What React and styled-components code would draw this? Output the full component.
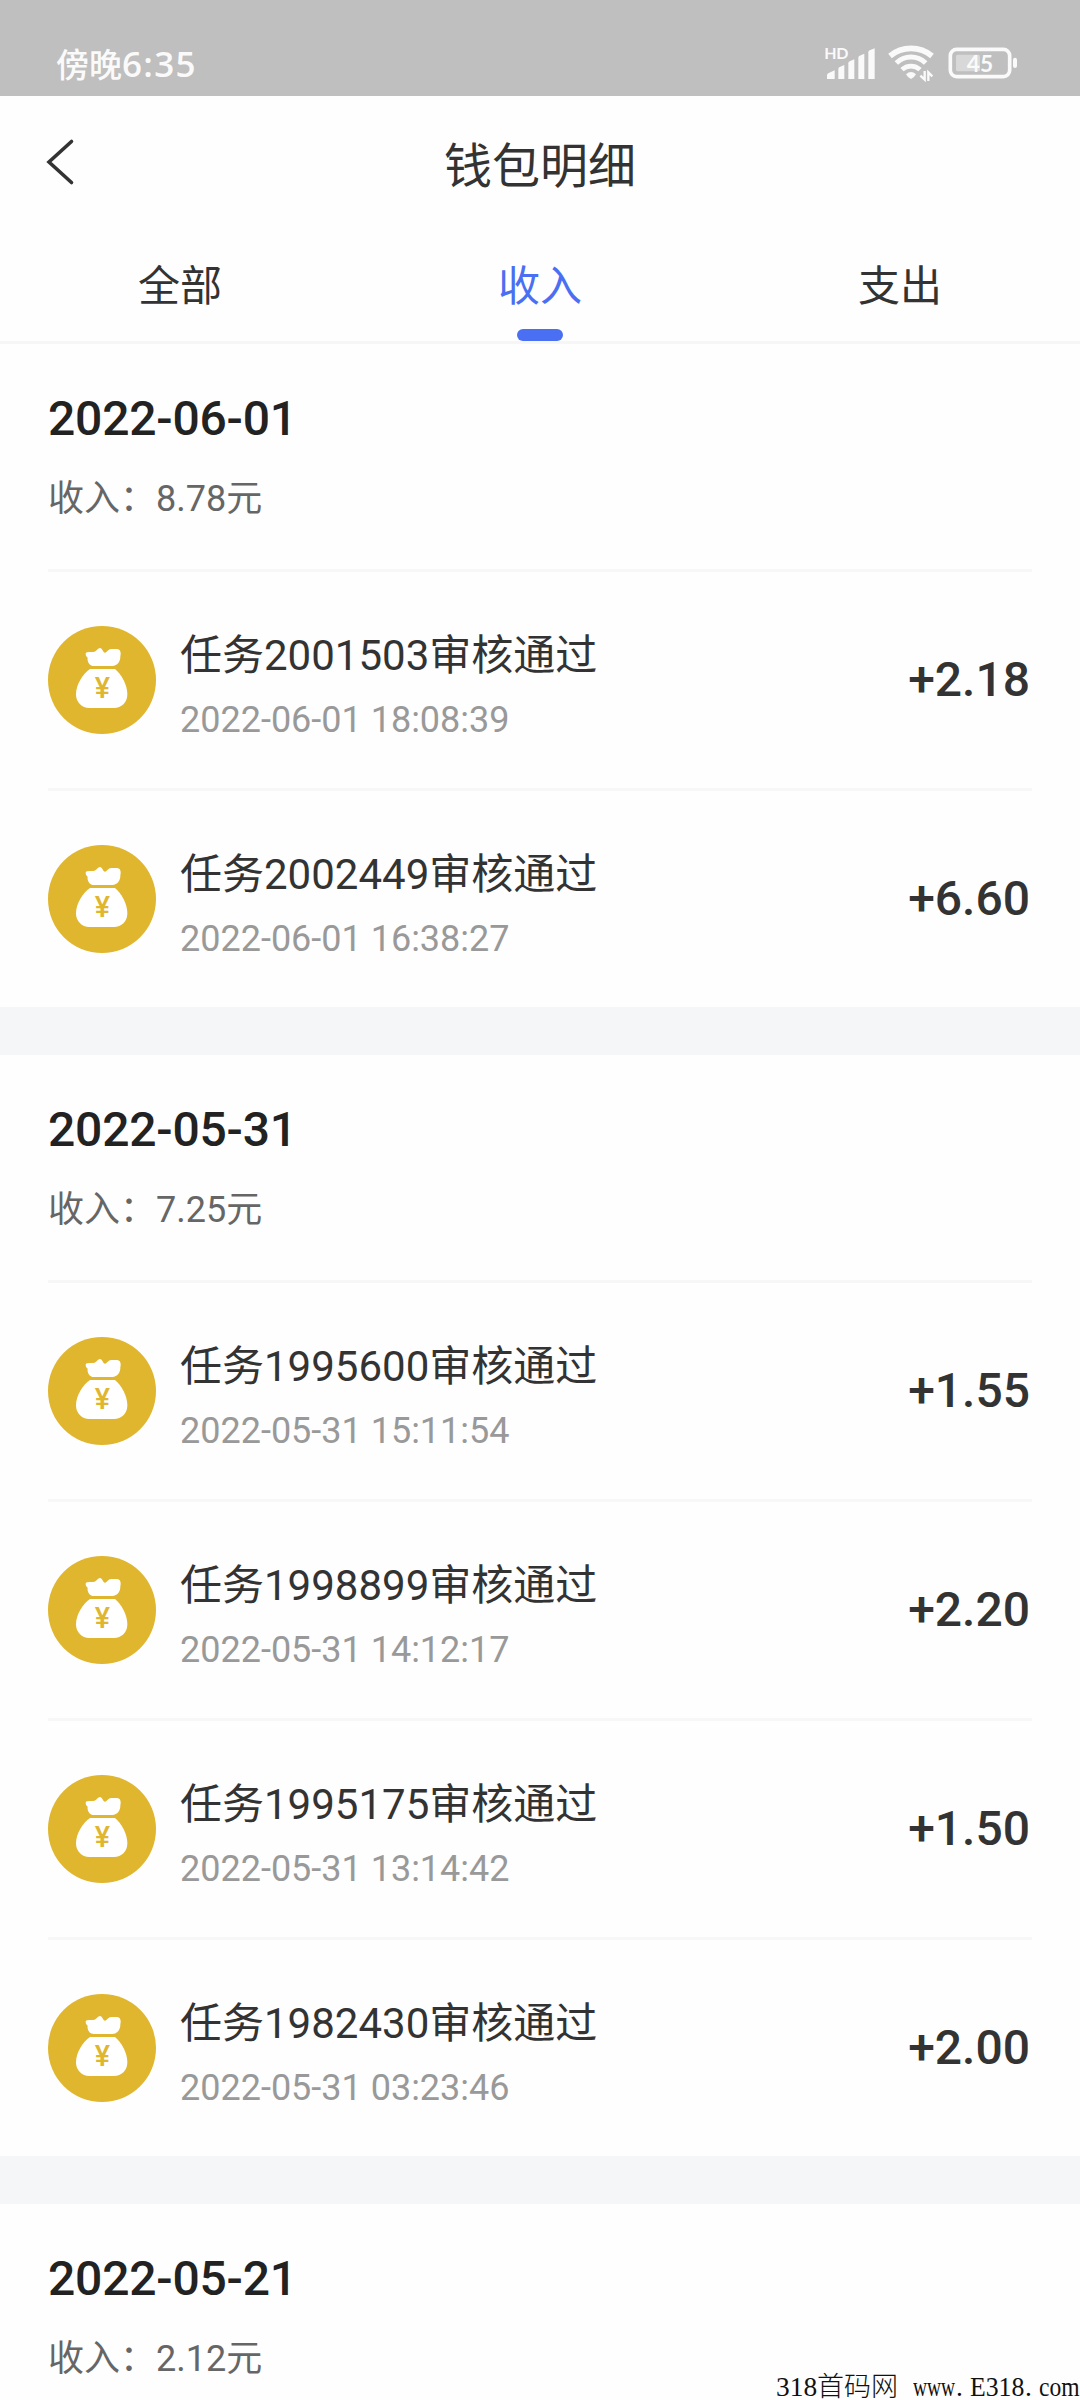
import React from "react";
import styled, { createGlobalStyle } from "styled-components";

const groups = [
  {
    date: "2022-06-01",
    total: "8.78",
    records: [
      { id: "2001503", time: "2022-06-01 18:08:39", amount: "+2.18" },
      { id: "2002449", time: "2022-06-01 16:38:27", amount: "+6.60" },
    ],
  },
  {
    date: "2022-05-31",
    total: "7.25",
    records: [
      { id: "1995600", time: "2022-05-31 15:11:54", amount: "+1.55" },
      { id: "1998899", time: "2022-05-31 14:12:17", amount: "+2.20" },
      { id: "1995175", time: "2022-05-31 13:14:42", amount: "+1.50" },
      { id: "1982430", time: "2022-05-31 03:23:46", amount: "+2.00" },
    ],
  },
  { date: "2022-05-21", total: "2.12", records: [] },
];

const tabs = ["全部", "收入", "支出"];

const SignalIcon = () => (
  <svg width="52" height="34" viewBox="132 78 156 102" fill="#fafafa">
    <text x="133" y="117" fontSize="48" fontWeight="700" fontFamily="Lato, sans-serif" textLength="72">
      HD
    </text>
    <path d="M141 177V166Q141 162 145 160L164 151V177Z" />
    <path d="M175 177V147Q175 143 179 141L193 135V177Z" />
    <path d="M205 177V130Q205 126 209 124L223 118V177Z" />
    <path d="M235 177V113Q235 109 239 107L253 101V177Z" />
    <path d="M265 177V97Q265 93 269 91L284 85V177Z" />
  </svg>
);

const WifiIcon = () => (
  <svg width="48" height="38" viewBox="321 75 144 114" fill="none" stroke="#fafafa">
    <path d="M330 111A99 99 0 0 1 456 111" strokeWidth="17" />
    <path d="M349 132A63 63 0 0 1 437 132" strokeWidth="15" />
    <path d="M366 152A39 39 0 0 1 420 152" strokeWidth="14" />
    <path d="M378 166Q393 152 408 166Q405 173 393 180Q381 173 378 166Z" fill="#fafafa" stroke="none" />
    <path d="M434 156V182L421 170M445 186V160L457 172" strokeWidth="7" />
  </svg>
);

const BatteryIcon = () => (
  <svg width="70" height="32" viewBox="504 81 210 96" fill="none">
    <rect x="511" y="88" width="178" height="82" rx="19" stroke="#fafafa" strokeWidth="11" />
    <rect x="528" y="104" width="72" height="50" rx="5" fill="#d8d8d8" />
    <rect x="699" y="113" width="12" height="31" rx="6" fill="#fafafa" />
    <text x="600" y="155" fontSize="68" fontWeight="700" fontFamily="Lato, sans-serif" fill="#fafafa" textAnchor="middle">
      45
    </text>
  </svg>
);

const MoneyBag = () => (
  <svg width="108" height="108" viewBox="0 0 324 324">
    <circle cx="162" cy="162" r="162" fill="#e0b62f" />
    <path
      d="M113 84C113 76 121 79 140 77C146 75 150 66 156 66C163 66 165 80 171 80C177 80 180 69 190 69H207C217 69 220 80 217 91C218 106 208 120 193 120H138C124 120 117 106 119 95C116 92 113 90 113 84Z"
      fill="#fff"
    />
    <path
      d="M126 129H201C220 144 238 176 238 205C238 230 220 246 198 246H124C101 246 84 229 84 205C84 175 105 143 126 129Z"
      fill="#fff"
    />
    <text x="163" y="217" fontSize="86" fontWeight="500" fontFamily="Roboto, sans-serif" fill="#e0b62f" textAnchor="middle">
      ¥
    </text>
  </svg>
);

const App = () => {
  return (
    <Screen>
      <GlobalStyle />
      <StatusBar>
        <Clock>
          傍晚<span>6:35</span>
        </Clock>
        <SignalIcon />
        <WifiIcon />
        <BatteryIcon />
      </StatusBar>
      <NavBar>
        <BackButton aria-label="返回">
          <svg width="32" height="48" viewBox="0 0 32 48" fill="none" stroke="#333" strokeWidth="3.6">
            <path d="M27.5 3.5L5 24L27.5 44.5" strokeLinecap="round" />
          </svg>
        </BackButton>
        <h1>钱包明细</h1>
      </NavBar>
      <Tabs>
        {tabs.map((tab) => (
          <Tab key={tab} $active={tab === "收入"}>
            {tab}
          </Tab>
        ))}
      </Tabs>
      {groups.map((group) => {
        const { date, total, records } = group;
        return (
          <Group key={date}>
            <GroupHeader>
              <h2>{date}</h2>
              <p>收入：{total}元</p>
            </GroupHeader>
            {records.map((item) => (
              <Record key={item.id}>
                <MoneyBag />
                <RecordInfo>
                  <h3>任务{item.id}审核通过</h3>
                  <time>{item.time}</time>
                </RecordInfo>
                <Amount>{item.amount}</Amount>
              </Record>
            ))}
          </Group>
        );
      })}
      <Watermark>
        <Narrow $width={41}>318</Narrow>
        <b>首码网 </b>
        <Narrow $width={43} $scale={0.71}>www</Narrow>
        <Narrow $width={14}>.</Narrow>
        <Narrow $width={55} $scale={0.94}>E318</Narrow>
        <Narrow $width={14}>.</Narrow>
        <Narrow $width={41} $scale={0.86}>com</Narrow>
      </Watermark>
    </Screen>
  );
};

export default App;

const GlobalStyle = createGlobalStyle`
  * {
    box-sizing: border-box;
    margin: 0;
    padding: 0;
  }
  body {
    background: #fff;
    font-family: Roboto, "Noto Sans CJK SC", sans-serif;
  }
  svg {
    display: block;
    flex-shrink: 0;
    overflow: visible;
  }
`;

const Screen = styled.div`
  position: relative;
  width: 1080px;
  height: 2400px;
  overflow: hidden;
  background: #fefefe;
`;

const StatusBar = styled.div`
  display: flex;
  align-items: center;
  height: 96px;
  padding: 30px 62px 0 56px;
  background: #bfbfbf;
  svg + svg {
    margin-left: 11px;
  }
  svg:last-child {
    margin-left: 13px;
  }
`;

const Clock = styled.div`
  margin-right: auto;
  color: #fafafa;
  font-family: "Noto Sans CJK SC", sans-serif;
  font-size: 33px;
  font-weight: 500;
  line-height: 40px;
  span {
    font-family: "Open Sans", sans-serif;
    font-size: 35px;
    font-weight: 600;
    letter-spacing: 1.3px;
  }
`;

const NavBar = styled.header`
  display: grid;
  grid-template-columns: 120px 1fr 120px;
  align-items: center;
  height: 138px;
  h1 {
    padding-top: 4px;
    color: #333;
    font-size: 48px;
    font-weight: 400;
    line-height: 72px;
    text-align: center;
  }
`;

const BackButton = styled.button`
  padding-left: 44px;
  padding-bottom: 6px;
  border: none;
  background: none;
`;

const Tabs = styled.nav`
  display: grid;
  grid-template-columns: repeat(3, 1fr);
  height: 110px;
  border-bottom: 3px solid #f6f6f7;
`;

const Tab = styled.div`
  display: flex;
  flex-direction: column;
  align-items: center;
  justify-content: space-between;
  padding-top: 21px;
  color: ${({ $active }) => ($active ? "#4a6ff3" : "#333")};
  font-size: 42px;
  line-height: 64px;
  &::after {
    content: "";
    width: 46px;
    height: 12px;
    border-radius: 6px;
    background: ${({ $active }) => ($active ? "#4a6ff3" : "transparent")};
  }
`;

const Group = styled.section`
  & + & {
    border-top: 48px solid #f5f6f8;
  }
`;

const GroupHeader = styled.div`
  height: 228px;
  margin: 0 48px;
  padding-top: 43px;
  border-bottom: 3px solid #f7f7f7;
  h2 {
    color: #222;
    font-size: 48px;
    font-weight: 500;
    line-height: 64px;
    letter-spacing: -0.2px;
  }
  p {
    margin-top: 21px;
    color: #666;
    font-size: 36px;
    line-height: 54px;
  }
`;

const Record = styled.div`
  display: flex;
  align-items: center;
  height: 216px;
  margin: 0 48px;
  & + & {
    height: 219px;
    border-top: 3px solid #f7f7f7;
  }
`;

const RecordInfo = styled.div`
  flex: 1;
  margin-left: 24px;
  padding-top: 11px;
  h3 {
    color: #333;
    font-size: 42px;
    font-weight: 400;
    line-height: 64px;
  }
  time {
    display: block;
    margin-top: 5px;
    color: #999;
    font-size: 36px;
    line-height: 54px;
  }
`;

const Amount = styled.span`
  padding: 0 2px 2px 0;
  color: #333;
  font-size: 48px;
  font-weight: 500;
`;

const Watermark = styled.div`
  position: absolute;
  right: 0;
  bottom: 0;
  display: flex;
  align-items: baseline;
  color: #111;
  font-family: "Liberation Serif", serif;
  font-size: 27.4px;
  line-height: 26px;
  white-space: pre;
  b {
    width: 96px;
    font-family: "Noto Sans CJK SC", sans-serif;
    font-size: 27px;
    font-weight: 300;
  }
`;

const Narrow = styled.span`
  width: ${({ $width }) => $width}px;
  transform: scaleX(${({ $scale }) => $scale || 1});
  transform-origin: left;
`;
